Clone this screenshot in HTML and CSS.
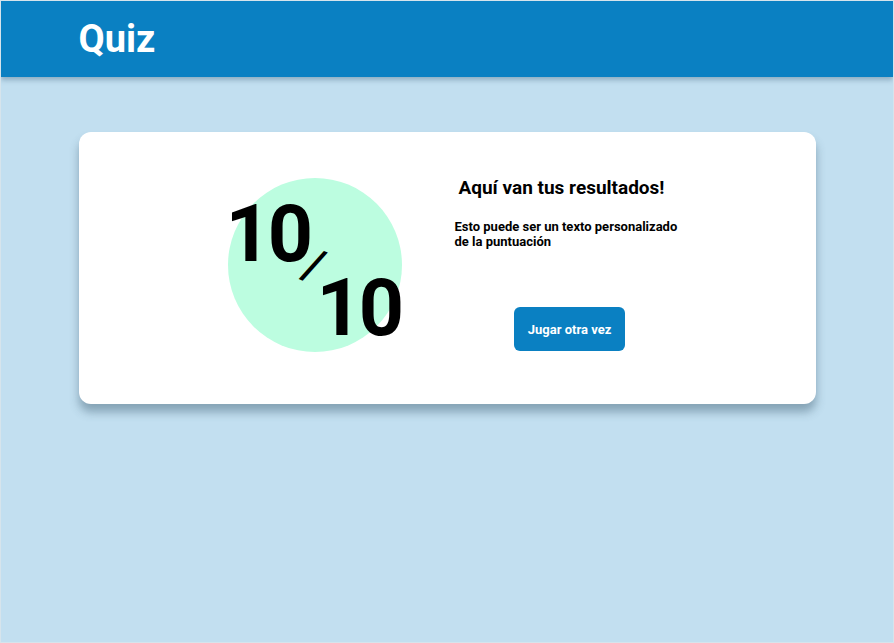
FILE: index.html
```html
<!DOCTYPE html>
<html lang="es">
<head>
<meta charset="utf-8">
<title>Quiz</title>
<link rel="stylesheet" href="styles.css">
</head>
<body>
<div class="page">
  <header class="topbar">
    <div class="container">
      <h1 class="brand">Quiz</h1>
    </div>
  </header>
  <main class="container">
    <section class="card">
      <div class="score-col">
        <div class="score">
          <span class="num num-top">10</span>
          <span class="slash">/</span>
          <span class="num num-bottom">10</span>
        </div>
      </div>
      <div class="info-col">
        <h2 class="title">Aquí van tus resultados!</h2>
        <p class="desc">Esto puede ser un texto personalizado de la puntuación</p>
        <div class="actions">
          <button class="btn">Jugar otra vez</button>
        </div>
      </div>
    </section>
  </main>
</div>
</body>
</html>
```

FILE: styles.css
```css
* { box-sizing: border-box; }
html, body { margin: 0; padding: 0; }
body {
  font-family: Roboto, "Liberation Sans", Arial, sans-serif;
  background: #c2dff0;
}
.page {
  width: 894px;
  height: 643px;
  border: 1px solid #d6e4ec;
  overflow: hidden;
}
.topbar {
  background: #0a80c2;
  height: 76px;
  box-shadow: 0 3px 5px rgba(40, 80, 110, 0.35);
  display: flex;
  align-items: center;
}
.container {
  width: 737px;
  margin: 0 auto;
}
.brand {
  margin: 0;
  color: #fff;
  font-size: 38px;
  font-weight: 700;
  line-height: 1;
}
main.container { padding-top: 55px; }
.card {
  background: #fff;
  border-radius: 12px;
  height: 272px;
  box-shadow: 0 8px 10px rgba(60, 90, 110, 0.45);
  display: flex;
}
.score-col {
  padding-left: 149px;
  padding-top: 46px;
  width: 376px;
}
.score {
  position: relative;
  width: 174px;
  height: 174px;
  border-radius: 50%;
  background: #bcfde0;
}
.num {
  position: absolute;
  font-size: 79px;
  font-weight: 700;
  line-height: 1;
  letter-spacing: -3px;
  color: #000;
}
.num-top { left: -2px; top: 17px; }
.num-bottom { left: 89px; top: 91px; }
.slash {
  position: absolute;
  left: 77px;
  top: 64px;
  font-size: 46px;
  font-weight: 500;
  line-height: 1;
  color: #000;
  transform: rotate(22deg);
}
.info-col {
  width: 230px;
  padding-top: 45px;
}
.title {
  margin: 0 0 0 4px;
  font-size: 19px;
  font-weight: 700;
  line-height: 22px;
  color: #000;
}
.desc {
  margin: 20px 0 0;
  font-size: 13px;
  font-weight: 700;
  line-height: 15px;
  color: #000;
}
.actions {
  display: flex;
  justify-content: center;
  margin-top: 58px;
}
.btn {
  width: 111px;
  height: 44px;
  border: 0;
  border-radius: 6px;
  background: #0a80c2;
  color: #fff;
  font-family: Roboto, "Liberation Sans", Arial, sans-serif;
  font-size: 13px;
  font-weight: 700;
}
```
